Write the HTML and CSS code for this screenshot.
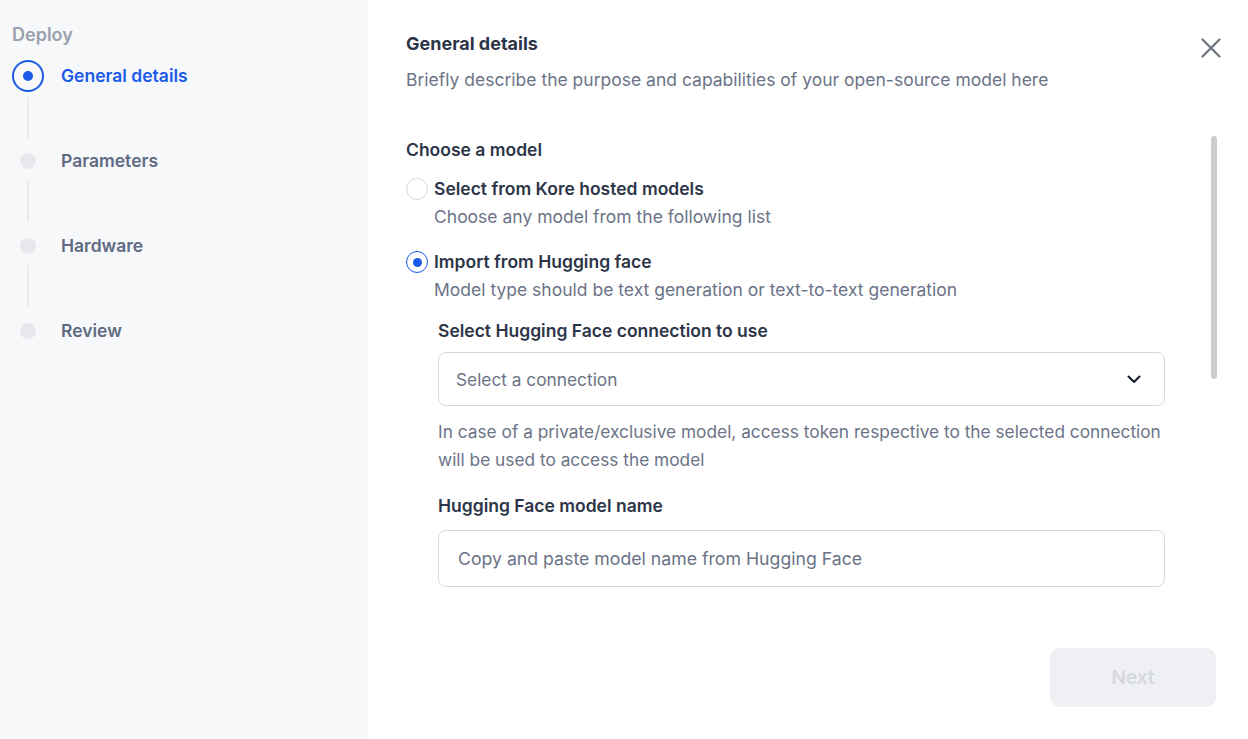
FILE: index.html
```html
<!DOCTYPE html>
<html>
<head>
<meta charset="utf-8">
<link rel="stylesheet" href="styles.css">
</head>
<body>
<div class="app">
  <aside class="sidebar">
    <div class="sidebar-title">Deploy</div>
    <ol class="steps">
      <li class="step active">
        <div class="marker"><span class="ring"><span class="dot"></span></span><span class="line"></span></div>
        <span class="step-label">General details</span>
      </li>
      <li class="step">
        <div class="marker"><span class="bullet"></span><span class="line"></span></div>
        <span class="step-label">Parameters</span>
      </li>
      <li class="step">
        <div class="marker"><span class="bullet"></span><span class="line"></span></div>
        <span class="step-label">Hardware</span>
      </li>
      <li class="step last">
        <div class="marker"><span class="bullet"></span></div>
        <span class="step-label">Review</span>
      </li>
    </ol>
  </aside>
  <main class="main">
    <button class="close" aria-label="Close">
      <svg width="22" height="22" viewBox="0 0 22 22"><path d="M2.5 2.5 L19.5 19.5 M19.5 2.5 L2.5 19.5" stroke="#6b7280" stroke-width="2.2" stroke-linecap="round" fill="none"/></svg>
    </button>
    <div class="scrollbar"></div>
    <header class="head">
      <h1 class="title">General details</h1>
      <p class="subtitle">Briefly describe the purpose and capabilities of your open-source model here</p>
    </header>
    <section class="form">
      <h2 class="section-label">Choose a model</h2>
      <div class="option">
        <span class="radio"></span>
        <div class="option-text">
          <div class="option-title">Select from Kore hosted models</div>
          <div class="option-desc">Choose any model from the following list</div>
        </div>
      </div>
      <div class="option">
        <span class="radio checked"><span class="radio-dot"></span></span>
        <div class="option-text">
          <div class="option-title">Import from Hugging face</div>
          <div class="option-desc">Model type should be text generation or text-to-text generation</div>
        </div>
      </div>
      <div class="sub">
        <label class="field-label">Select Hugging Face connection to use</label>
        <div class="select">
          <span class="placeholder">Select a connection</span>
          <svg width="18" height="18" viewBox="0 0 18 18"><path d="M3.5 6.5 L9 12 L14.5 6.5" stroke="#111827" stroke-width="2" fill="none" stroke-linecap="round" stroke-linejoin="round"/></svg>
        </div>
        <p class="help">In case of a private/exclusive model, access token respective to the selected connection will be used to access the model</p>
        <label class="field-label second">Hugging Face model name</label>
        <div class="input"><span class="placeholder wide">Copy and paste model name from Hugging Face</span></div>
      </div>
    </section>
    <footer class="footer">
      <button class="next">Next</button>
    </footer>
  </main>
</div>
</body>
</html>
```
FILE: styles.css
```css
* { box-sizing: border-box; }
html, body { margin: 0; padding: 0; }
body {
  font-family: Inter, "Noto Sans", sans-serif;
  background: #fff;
  width: 1248px;
  height: 739px;
  overflow: hidden;
}
.app { display: flex; height: 739px; }
.sidebar {
  width: 368px;
  flex: none;
  background: #f7f8fa;
  padding: 24px 0 0 12px;
}
.sidebar-title {
  font-size: 18px;
  font-weight: 600;
  color: #9aa1ae;
  line-height: 22px;
}
.steps { list-style: none; margin: 14px 0 0; padding: 0; }
.step { display: flex; align-items: flex-start; height: 85px; }
.marker { width: 32px; display: flex; flex-direction: column; align-items: center; }
.ring {
  width: 32px; height: 32px; border-radius: 50%;
  border: 2px solid #1a5ae8;
  display: flex; align-items: center; justify-content: center;
}
.dot { width: 10px; height: 10px; border-radius: 50%; background: #1a5ae8; }
.bullet { width: 16px; height: 16px; border-radius: 50%; background: #e6e8ec; margin-top: 8px; }
.line { width: 2px; background: #e8eaee; }
.step.active .line { height: 42px; margin-top: 5px; }
.step .bullet + .line { height: 42px; margin-top: 11px; }
.step-label {
  margin-left: 17px;
  font-size: 17.5px;
  font-weight: 600;
  line-height: 32px;
  color: #5f6b83;
}
.step.active .step-label { color: #1a5ae8; }

.main { flex: 1; position: relative; padding: 32px 0 0 38px; }
.close {
  position: absolute; top: 37px; right: 26px;
  background: none; border: 0; padding: 0; width: 22px; height: 22px; cursor: pointer;
}
.scrollbar {
  position: absolute; left: 843px; top: 136px;
  width: 6px; height: 243px; border-radius: 3px; background: #cbcbcb;
}
.title { margin: 0; font-size: 18px; font-weight: 700; color: #2d3648; line-height: 24px; }
.subtitle { margin: 12px 0 0; font-size: 17.5px; color: #6b7387; line-height: 24px; }
.form { margin-top: 46px; width: 760px; }
.section-label { margin: 0; font-size: 17.5px; font-weight: 600; color: #2d3648; line-height: 24px; }
.option { display: flex; align-items: flex-start; margin-top: 15px; }
.option + .option { margin-top: 21px; }
.radio {
  width: 22px; height: 22px; border-radius: 50%;
  border: 1.5px solid #d3d6dd; background: #fff;
  flex: none; margin-top: 1px;
  display: flex; align-items: center; justify-content: center;
}
.radio.checked { border: 1.5px solid #1a5ae8; }
.radio-dot { width: 9px; height: 9px; border-radius: 50%; background: #1a5ae8; }
.option-text { margin-left: 6px; }
.option-title { font-size: 17.5px; font-weight: 600; color: #2d3648; line-height: 24px; }
.option-desc { margin-top: 4px; font-size: 17.5px; color: #6b7387; line-height: 24px; }
.sub { margin-left: 32px; margin-top: 17px; width: 727px; }
.field-label { display: block; font-size: 17.5px; font-weight: 600; color: #2d3648; line-height: 24px; }
.field-label.second { margin-top: 20px; }
.select {
  margin-top: 9px; height: 54px;
  border: 1px solid #d5d8de; border-radius: 8px;
  display: flex; align-items: center; justify-content: space-between;
  padding: 0 21px 0 17px;
}
.placeholder { font-size: 17.3px; color: #6b7387; }
.placeholder.wide { font-size: 17.7px; }
.help { margin: 12px 0 0; font-size: 17.3px; color: #6b7387; line-height: 28px; }
.input {
  margin-top: 12px; height: 57px;
  border: 1px solid #d5d8de; border-radius: 8px;
  display: flex; align-items: center; padding: 0 19px;
}
.footer { position: absolute; left: 682px; top: 648px; }
.next {
  width: 166px; height: 59px; border: 0; border-radius: 10px;
  background: #eff0f3; color: #d5d8de;
  font-family: Inter, "Noto Sans", sans-serif; font-size: 19px; font-weight: 600;
}
```
